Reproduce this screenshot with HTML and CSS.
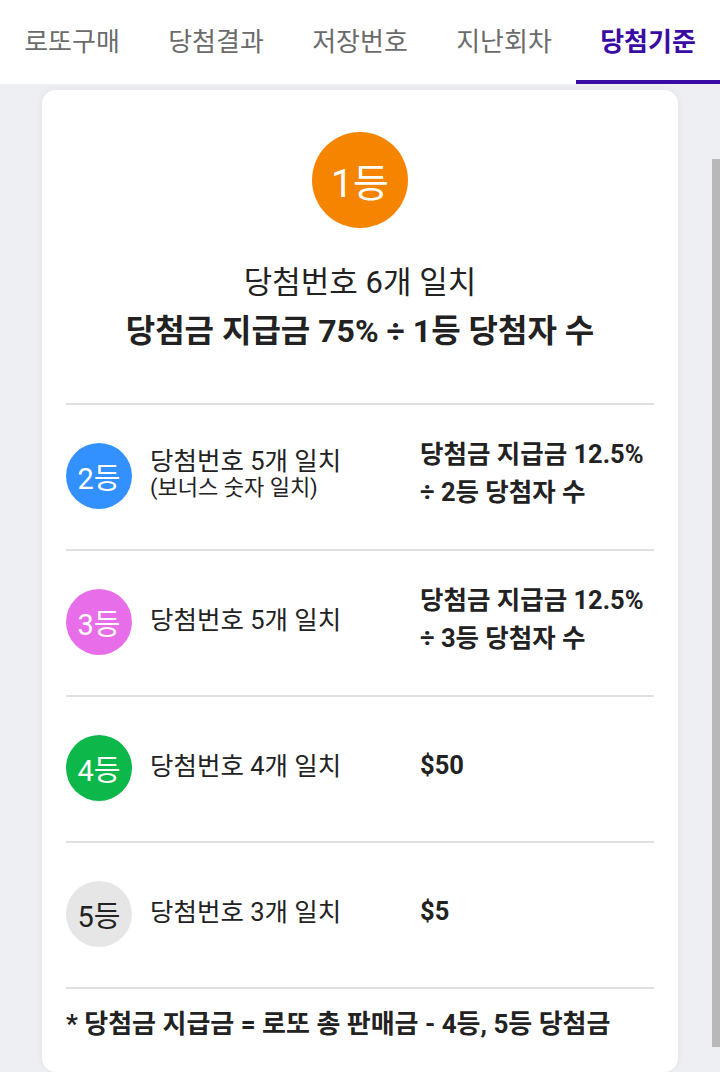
FILE: index.html
```html
<!DOCTYPE html>
<html lang="ko">
<head>
  <meta charset="UTF-8" />
  <meta name="viewport" content="width=device-width, initial-scale=1.0"/>
  <title>당첨기준</title>
  <link rel="stylesheet" href="styles.css">
</head>
<body>
  <nav class="tabs">
    <a href="#">로또구매</a>
    <a href="#">당첨결과</a>
    <a href="#">저장번호</a>
    <a href="#">지난회차</a>
    <a href="#" class="ativo">당첨기준</a>
  </nav>

  <main>
    <div class="card">
      <div class="primeiro">
        <div class="bola bola-1">1등</div>
        <p class="cond">당첨번호 6개 일치</p>
        <p class="premio">당첨금 지급금 75% ÷ 1등 당첨자 수</p>
      </div>

      <div class="linha">
        <div class="bola bola-2">2등</div>
        <div class="cond">당첨번호 5개 일치<small>(보너스 숫자 일치)</small></div>
        <div class="premio">당첨금 지급금 12.5%<br>÷ 2등 당첨자 수</div>
      </div>
      <div class="linha">
        <div class="bola bola-3">3등</div>
        <div class="cond">당첨번호 5개 일치</div>
        <div class="premio">당첨금 지급금 12.5%<br>÷ 3등 당첨자 수</div>
      </div>
      <div class="linha">
        <div class="bola bola-4">4등</div>
        <div class="cond">당첨번호 4개 일치</div>
        <div class="premio">$50</div>
      </div>
      <div class="linha">
        <div class="bola bola-5">5등</div>
        <div class="cond">당첨번호 3개 일치</div>
        <div class="premio">$5</div>
      </div>

      <p class="nota">* 당첨금 지급금 = 로또 총 판매금 - 4등, 5등 당첨금</p>
    </div>
  </main>

  <div class="scroll"></div>
</body>
</html>
```

FILE: styles.css
```css
body {
  font-family: Roboto, "Noto Sans CJK KR", sans-serif;
  background: #eeeff3;
  color: #222;
  margin: 0;
  height: 1072px;
  overflow: hidden;
}
.tabs {
  display: flex;
  height: 84px;
  background: white;
}
.tabs a {
  flex: 1;
  display: flex;
  align-items: center;
  justify-content: center;
  padding-bottom: 2px;
  font-size: 26px;
  color: #6b6b6b;
  text-decoration: none;
  border-bottom: 4px solid transparent;
}
.tabs a.ativo {
  color: #3a0ca3;
  font-weight: bold;
  border-bottom-color: #3a0ca3;
}
main {
  padding: 6px 42px 0;
}
.card {
  background: white;
  border-radius: 14px;
  box-shadow: 0 0 8px rgba(0, 0, 0, 0.06);
  padding: 0 24px;
}
.primeiro {
  display: flex;
  flex-direction: column;
  align-items: center;
  padding-top: 42px;
  height: 315px;
  box-sizing: border-box;
  border-bottom: 2px solid #e0e0e0;
}
.primeiro p {
  margin: 0;
  font-size: 31px;
  line-height: 48px;
}
.primeiro .cond {
  margin-top: 31px;
}
.primeiro .premio {
  font-size: 32px;
  font-weight: bold;
}
.bola {
  display: flex;
  align-items: center;
  justify-content: center;
  border-radius: 50%;
  color: white;
  width: 66px;
  height: 66px;
  font-size: 29px;
}
.bola-1 {
  width: 96px;
  height: 96px;
  font-size: 39px;
  background: #f58400;
}
.bola-2 { background: #3391ff; }
.bola-3 { background: #e76ee8; }
.bola-4 { background: #0db84b; }
.bola-5 { background: #e6e6e6; color: #222; }
.linha {
  display: grid;
  grid-template-columns: 66px 1fr 234px;
  column-gap: 18px;
  align-items: center;
  height: 146px;
  box-sizing: border-box;
  border-bottom: 2px solid #e0e0e0;
  padding-bottom: 2px;
}
.linha .cond {
  margin-top: -4px;
  font-size: 25.5px;
  line-height: 28px;
}
.linha .cond small {
  display: block;
  font-size: 22px;
  line-height: 26px;
}
.linha .premio {
  margin-top: -6px;
  font-size: 25.5px;
  font-weight: bold;
  line-height: 38px;
}
.nota {
  margin: 0;
  padding: 20px 0 33px;
  font-size: 26px;
  font-weight: bold;
  line-height: 30px;
}
.scroll {
  position: absolute;
  top: 159px;
  right: 0;
  width: 8px;
  height: 888px;
  background: #b8b8b8;
}
```
